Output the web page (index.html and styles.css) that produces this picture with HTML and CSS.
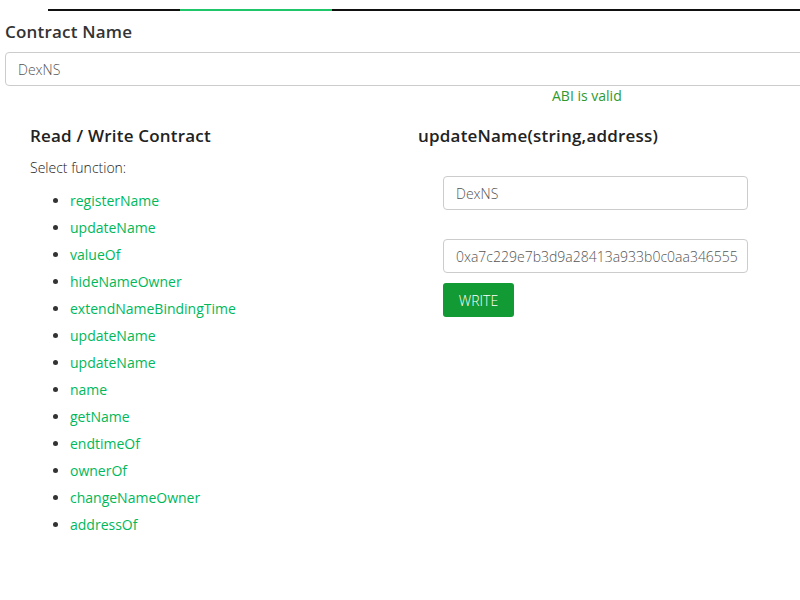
FILE: index.html
```html
<!DOCTYPE html>
<html>
<head>
<meta charset="utf-8">
<link rel="stylesheet" href="styles.css">
</head>
<body>
<div class="page">
  <div class="tabs"><span class="tab"></span><span class="tab active"></span><span class="tab rest"></span></div>
  <h2 class="label">Contract Name</h2>
  <div class="field wide">DexNS</div>
  <div class="valid">ABI is valid</div>
  <div class="cols">
    <div class="left">
      <h3 class="title">Read / Write Contract</h3>
      <p class="sel">Select function:</p>
      <ul class="funcs">
        <li><a>registerName</a></li>
        <li><a>updateName</a></li>
        <li><a>valueOf</a></li>
        <li><a>hideNameOwner</a></li>
        <li><a>extendNameBindingTime</a></li>
        <li><a>updateName</a></li>
        <li><a>updateName</a></li>
        <li><a>name</a></li>
        <li><a>getName</a></li>
        <li><a>endtimeOf</a></li>
        <li><a>ownerOf</a></li>
        <li><a>changeNameOwner</a></li>
        <li><a>addressOf</a></li>
      </ul>
    </div>
    <div class="right">
      <h3 class="title">updateName(string,address)</h3>
      <div class="form">
        <div class="field box">DexNS</div>
        <div class="field box">0xa7c229e7b3d9a28413a933b0c0aa346555</div>
        <button class="write">WRITE</button>
      </div>
    </div>
  </div>
</div>
</body>
</html>
```
FILE: styles.css
```css
* { box-sizing: border-box; }
html, body { margin: 0; padding: 0; background: #fff; }
body { font-family: "Open Sans", "Lato", sans-serif; color: #333; overflow: hidden; width: 800px; height: 600px; }
.page { padding: 9px 0 0 5px; }
.tabs { display: flex; margin-left: 43px; height: 2px; }
.tab { width: 132px; background: #111; }
.tab.active { width: 152px; background: #1fc76a; }
.tab.rest { flex: 1; }
.label { font-size: 17px; font-weight: 600; margin: 10px 0 0 0; line-height: 22px; color: #333; letter-spacing: 0.2px; }
.field { border: 1px solid #ccc; border-radius: 4px; font-size: 14px; color: #555; font-weight: 300; display: flex; align-items: center; white-space: nowrap; overflow: hidden; }
.wide { margin-top: 9px; height: 34px; width: 820px; padding-left: 12px; }
.valid { margin: 2px 0 0 547px; color: #2e9a2e; font-size: 14px; line-height: 16px; font-weight: 400; }
.cols { display: flex; margin-top: 21px; }
.left { width: 413px; padding-left: 25px; }
.title { font-size: 17px; font-weight: 600; margin: 0; line-height: 22px; color: #222; letter-spacing: 0.2px; }
.sel { margin: 12px 0 0 0; font-size: 14px; font-weight: 300; line-height: 18px; color: #222; }
.funcs { margin: 15px 0 0 0; padding-left: 40px; font-size: 14px; line-height: 17px; }
.funcs li { margin-bottom: 10px; color: #333; }
.funcs a { color: #00b85a; font-weight: 400; }
.right { flex: 1; }
.form { padding: 29px 0 0 25px; display: flex; flex-direction: column; }
.box { width: 305px; height: 34px; padding-left: 12px; margin-bottom: 29px; }
.box + .box { margin-bottom: 10px; }
.write { align-self: flex-start; width: 71px; height: 34px; background: #129a35; color: #fff; border: 0; border-radius: 3px; font-family: inherit; font-size: 14px; font-weight: 300; padding: 0; }
```
